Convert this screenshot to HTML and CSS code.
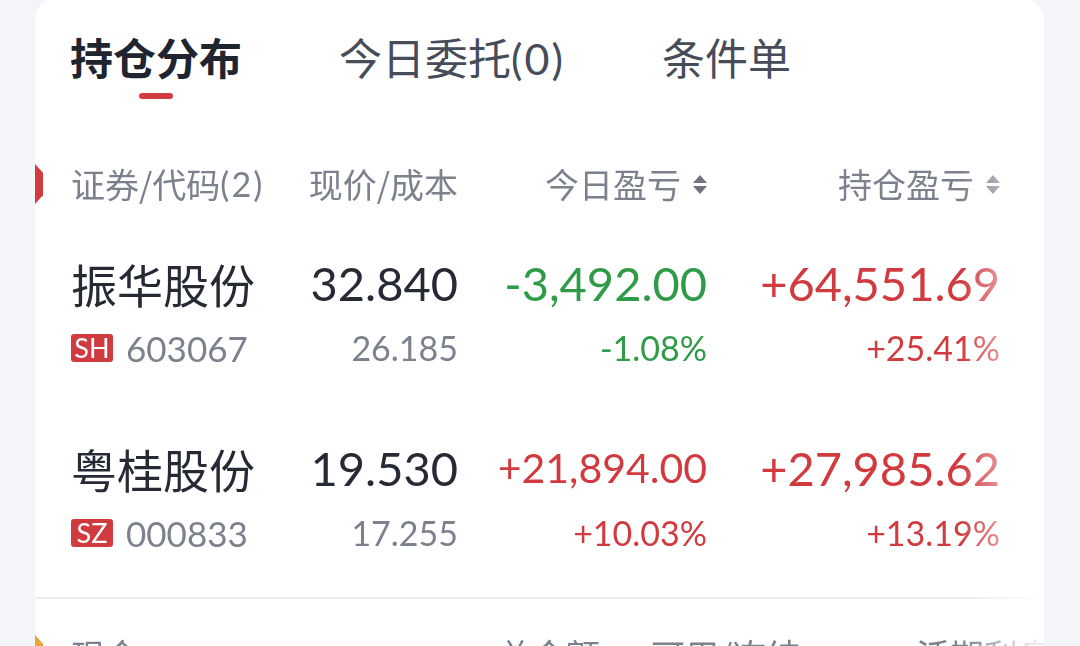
FILE: index.html
```html
<!DOCTYPE html>
<html lang="zh">

<head>
    <meta charset="UTF-8">
    <meta name="viewport" content="width=device-width, initial-scale=1.0">
    <title>持仓分布</title>
    <link rel="stylesheet" href="styles.css">
</head>

<body>
    <div class="card">
        <div class="tabs">
            <div class="tab active">持仓分布</div>
            <div class="tab">今日委托<span class="paren">(0)</span></div>
            <div class="tab">条件单</div>
        </div>
        <div class="tab-line"></div>

        <div class="table">
            <div class="row head">
                <span class="marker red"></span>
                <div class="cell left">证券/代码<span class="paren">(2)</span></div>
                <div class="cell">现价/成本</div>
                <div class="cell">今日盈亏<i class="sort"></i></div>
                <div class="cell">持仓盈亏<i class="sort"></i></div>
            </div>

            <div class="stock">
                <div class="row main">
                    <div class="cell left name">振华股份</div>
                    <div class="cell num">32.840</div>
                    <div class="cell num down">-3,492.00</div>
                    <div class="cell num up">+64,551.69</div>
                </div>
                <div class="row sub">
                    <div class="cell left"><span class="badge">SH</span><span class="code">603067</span></div>
                    <div class="cell num muted">26.185</div>
                    <div class="cell num down">-1.08%</div>
                    <div class="cell num up">+25.41%</div>
                </div>
            </div>

            <div class="stock">
                <div class="row main">
                    <div class="cell left name">粤桂股份</div>
                    <div class="cell num">19.530</div>
                    <div class="cell num up fit">+21,894.00</div>
                    <div class="cell num up">+27,985.62</div>
                </div>
                <div class="row sub">
                    <div class="cell left"><span class="badge">SZ</span><span class="code">000833</span></div>
                    <div class="cell num muted">17.255</div>
                    <div class="cell num up">+10.03%</div>
                    <div class="cell num up">+13.19%</div>
                </div>
            </div>

            <div class="divider"></div>

            <div class="row head cash">
                <span class="marker orange"></span>
                <div class="cell left">现金</div>
                <div class="cell left">总金额</div>
                <div class="cell left">可用/冻结</div>
                <div class="cell left">活期利息</div>
            </div>
        </div>
    </div>
</body>

</html>
```

FILE: styles.css
```css
:root {
    --bg: #f4f5f8;
    --card: #ffffff;
    --text: #252a35;
    --tab-text: #464c58;
    --muted: #7b818d;
    --red: #d13a3e;
    --green: #2e9b47;
    --orange: #e8a53a;
}

body {
    margin: 0;
    background: var(--bg);
    font-family: "Noto Sans CJK SC", "Noto Sans", sans-serif;
    color: var(--text);
    overflow: hidden;
}

.card {
    margin: -2px 0 0 35px;
    width: 1009px;
    height: 700px;
    background: var(--card);
    border-radius: 22px;
    overflow: hidden;
}

/* 顶部标签 */
.tabs {
    display: flex;
    gap: 97px;
    padding: 36px 0 0 35px;
    font-size: 43px;
    line-height: 44px;
    color: var(--tab-text);
}

.tab.active {
    font-weight: 700;
    color: #20242e;
}

.paren {
    font-family: Lato, "Noto Sans", sans-serif;
    letter-spacing: 2px;
}

.tab-line {
    width: 34px;
    height: 6px;
    margin: 12px 0 0 104px;
    border-radius: 3px;
    background: var(--red);
}

/* 持仓表格 */
.table {
    margin-top: 63px;
    -webkit-mask-image: linear-gradient(to right, #000 925px, rgba(0, 0, 0, 0.15) 1000px);
    mask-image: linear-gradient(to right, #000 925px, rgba(0, 0, 0, 0.15) 1000px);
}

.row {
    position: relative;
    display: grid;
    grid-template-columns: 200px 187px 249px 293px;
    padding-left: 36px;
    align-items: center;
}

.cell {
    display: flex;
    align-items: center;
    justify-content: flex-end;
    white-space: nowrap;
}

.cell.left {
    justify-content: flex-start;
}

.head {
    font-size: 34px;
    line-height: 44px;
    color: var(--muted);
}

.marker {
    position: absolute;
    left: 0;
    top: 2px;
    width: 8px;
    height: 40px;
    clip-path: polygon(0 0, 100% 22%, 100% 78%, 0 100%);
}

.marker.red {
    background: var(--red);
}

.marker.orange {
    background: var(--orange);
}

.sort {
    display: inline-flex;
    flex-direction: column;
    gap: 3px;
    margin-left: 12px;
}

.sort::before,
.sort::after {
    content: "";
    width: 0;
    height: 0;
    border-left: 7px solid transparent;
    border-right: 7px solid transparent;
}

.sort::before {
    border-bottom: 8px solid #6f7480;
}

.sort::after {
    border-top: 8px solid #6f7480;
}

.stock {
    margin-top: 49px;
}

.stock + .stock {
    margin-top: 72px;
}

.num {
    font-family: Lato, "Noto Sans", sans-serif;
}

.main {
    font-size: 46px;
    line-height: 56px;
}

.main .num {
    font-size: 47px;
}

.main .num.fit {
    font-size: 41px;
}

.name {
    font-size: 46px;
    color: var(--text);
}

.sub {
    margin-top: 17px;
    font-size: 34px;
    line-height: 40px;
}

.sub .num {
    font-size: 34px;
}

.badge {
    width: 42px;
    height: 28px;
    margin-right: 13px;
    border-radius: 3px;
    background: var(--red);
    color: #fff;
    font-family: Lato, "Noto Sans", sans-serif;
    font-size: 27px;
    line-height: 28px;
    text-align: center;
}

.code {
    font-family: Lato, "Noto Sans", sans-serif;
    color: var(--muted);
    font-size: 35px;
}

.muted {
    color: var(--muted);
}

.up {
    color: var(--red);
}

.down {
    color: var(--green);
}

.divider {
    height: 2px;
    margin-top: 44px;
    background: #ececee;
}

.cash {
    margin-top: 34px;
    grid-template-columns: 427px 153px 265px 92px;
}
```
